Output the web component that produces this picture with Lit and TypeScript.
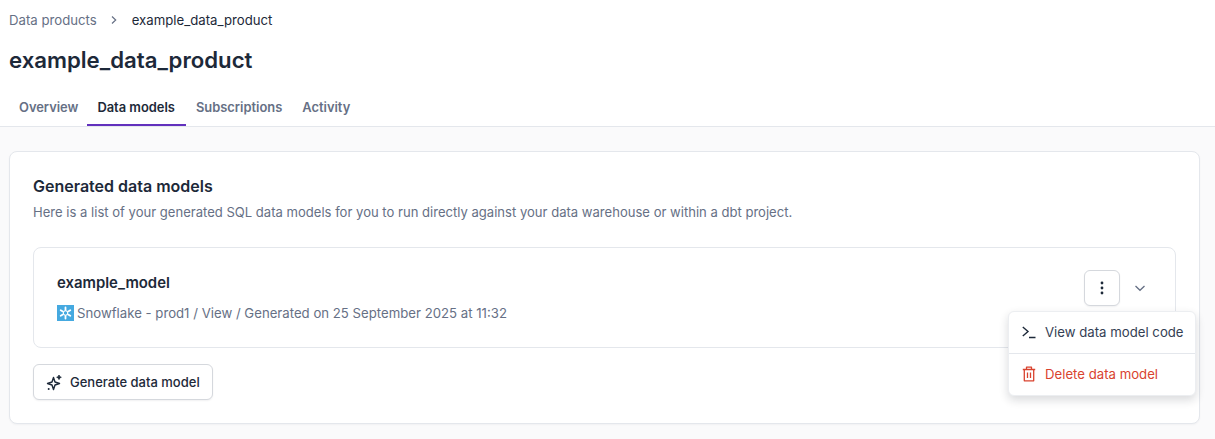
import { LitElement, html, css } from "lit";
import { customElement } from "lit/decorators.js";

@customElement("app-root")
export class AppRoot extends LitElement {
  static styles = css`
    :host { display: block; width: 1215px; height: 439px; overflow: hidden; font-family: Inter, "Liberation Sans", sans-serif; background: #fafafb; color: #1d2939; }
    * { box-sizing: border-box; }
    .top { background: #fff; height: 127px; border-bottom: 1px solid #e4e7ec; padding: 11px 9px 0; }
    .crumbs { display: flex; align-items: center; height: 18px; font-size: 13.2px; line-height: 18px; color: #667085; }
    .crumbs svg { margin: 0 12px 0 11px; }
    .crumbs b { font-weight: 400; color: #1d2939; }
    h1 { margin: 15px 0 0; font-size: 22.2px; line-height: 32px; font-weight: 600; color: #1d2939; }
    .tabs { display: flex; margin-top: 15px; height: 36px; }
    .tab { padding: 0 10px; font-size: 12.9px; font-weight: 600; line-height: 33px; color: #667085; height: 35px; }
    .tab:first-child { padding-right: 9px; }
    .tab.on { padding-right: 11px; color: #1d2939; border-bottom: 2px solid #6231bd; }
    .wrap { padding: 24px 15px 0 9px; }
    .card { position: relative; height: 273px; background: #fff; border: 1px solid #e4e7ec; border-radius: 8px; padding: 24px 23px; box-shadow: 0 1px 2px rgba(16,24,40,.04); }
    h2 { margin: 0; font-size: 16px; line-height: 21px; font-weight: 600; }
    .sub { margin: 6px 0 0; font-size: 13.07px; line-height: 18px; color: #667085; }
    .model { display: flex; justify-content: space-between; align-items: center; height: 101px; margin-top: 26px; border: 1px solid #e4e7ec; border-radius: 8px; padding: 0 23px; }
    .name { font-size: 14.9px; line-height: 20px; font-weight: 600; }
    .meta { display: flex; align-items: center; gap: 3px; margin-top: 11px; font-size: 13.2px; line-height: 18px; color: #667085; }
    .actions { display: flex; align-items: center; gap: 12px; margin: -20px 4px 0 0; }
    .btn { display: inline-flex; align-items: center; background: #fff; border: 1px solid #d5d8dd; border-radius: 6px; box-shadow: 0 1px 2px rgba(16,24,40,.06); }
    .dots { width: 36px; height: 36px; justify-content: center; }
    .gen { gap: 7px; margin-top: 16px; height: 36px; padding: 0 12px; font-size: 13px; font-weight: 500; color: #1d2939; }
    .menu { position: absolute; left: 998px; top: 159px; width: 188px; height: 85px; background: #fff; border-radius: 6px; border: 1px solid #eceef1; box-shadow: 0 4px 10px rgba(16,24,40,.16); }
    .item { display: flex; align-items: center; gap: 9px; height: 41px; padding: 0 0 2px 13px; font-size: 13.2px; line-height: 18px; color: #344054; white-space: nowrap; }
    .item + .item { height: 42px; border-top: 1px solid #e4e7ec; color: #d9432f; }
  `;

  render() {
    return html`
      <div class="top">
        <div class="crumbs">Data products
          <svg width="12" height="12" viewBox="0 0 12 12" fill="none" stroke="#667085" stroke-width="1.2"><path d="M4 2.5 7.700 6 4 9.500"/></svg>
          <b>example_data_product</b></div>
        <h1>example_data_product</h1>
        <div class="tabs">
          <div class="tab">Overview</div><div class="tab on">Data models</div><div class="tab">Subscriptions</div><div class="tab">Activity</div>
        </div>
      </div>
      <div class="wrap"><div class="card">
        <h2>Generated data models</h2>
        <p class="sub">Here is a list of your generated SQL data models for you to run directly against your data warehouse or within a dbt project.</p>
        <div class="model">
          <div>
            <div class="name">example_model</div>
            <div class="meta">
              <svg width="17" height="16" viewBox="0 0 17 16"><rect width="17" height="16" fill="#45a9e0"/><g stroke="#fff" stroke-width="1.800" stroke-linecap="round"><path d="M8.500 2.500v11M3.700 5.200l9.600 5.600M13.300 5.200l-9.600 5.600"/></g><circle cx="8.500" cy="8" r="2.200" fill="#45a9e0" stroke="#fff"/></svg>
              <span>Snowflake - prod1 / View / Generated on 25 September 2025 at 11:32</span>
            </div>
          </div>
          <div class="actions">
            <div class="btn dots"><svg width="16" height="16" viewBox="0 0 16 16" fill="#1d2939"><circle cx="8" cy="3" r="1.400"/><circle cx="8" cy="8" r="1.400"/><circle cx="8" cy="13" r="1.400"/></svg></div>
            <svg width="16" height="16" viewBox="0 0 16 16" fill="none" stroke="#667085" stroke-width="1.300"><path d="M3.500 6 8 10.300 12.500 6"/></svg>
          </div>
        </div>
        <div class="btn gen">
          <svg width="17" height="17" viewBox="0 0 17 17" fill="none" stroke="#1d2939" stroke-width="1.400" stroke-linejoin="round"><path d="M7.500 3.500 9 8l4.500 1.500L9 11l-1.500 4.500L6 11 1.500 9.500 6 8z"/><path fill="#1d2939" stroke-width=".8" d="M13 1l.7 1.600 1.600.7-1.600.7-.7 1.600-.7-1.600-1.600-.7 1.600-.7z"/><circle cx="2.700" cy="15" r="1" fill="#1d2939" stroke="none"/></svg>
          Generate data model
        </div>
        <div class="menu">
          <div class="item">
            <svg width="14" height="14" viewBox="0 0 14 14" fill="none" stroke="#1d2939" stroke-width="1.400"><path d="M.8 2 6 6.500.8 11M7 12.500H13.500"/></svg>
            View data model code
          </div>
          <div class="item">
            <svg width="14" height="16" viewBox="0 0 14 16" fill="none" stroke="#d9432f" stroke-width="1.300" stroke-linejoin="round"><path d="M.8 3.500h12.400M4.500 3.500V1.200h5v2.300M2.300 3.500v11.300h9.400V3.500M5.500 6.500v5.500M8.500 6.500v5.500"/></svg>
            Delete data model
          </div>
        </div>
      </div></div>
    `;
  }
}
